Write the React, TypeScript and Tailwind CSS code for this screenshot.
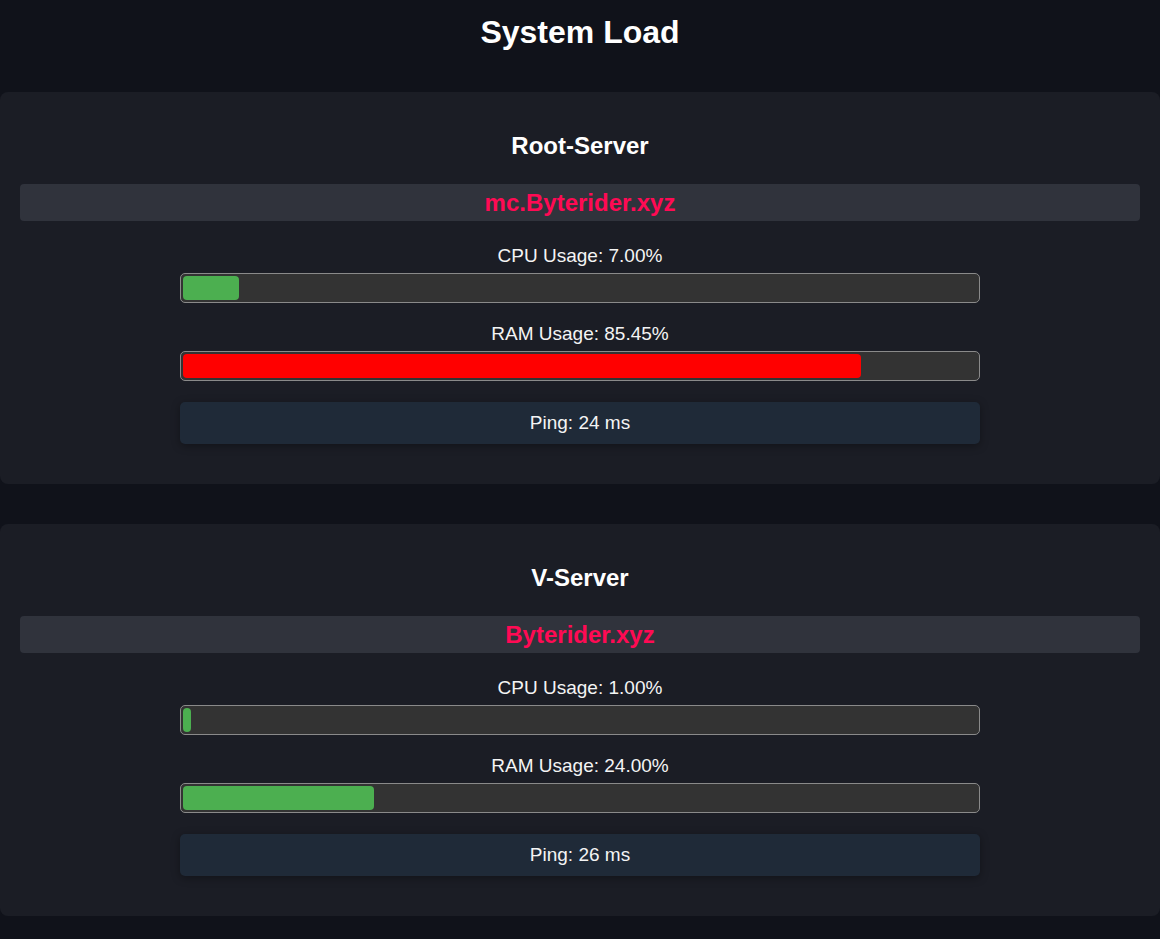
type Server = {
  name: string;
  host: string;
  cpu: number;
  ram: number;
  ping: number;
};

const servers: Server[] = [
  { name: "Root-Server", host: "mc.Byterider.xyz", cpu: 7, ram: 85.45, ping: 24 },
  { name: "V-Server", host: "Byterider.xyz", cpu: 1, ram: 24, ping: 26 },
];

function UsageBar({ label, value }: { label: string; value: number }) {
  const color = value > 80 ? "bg-[#ff0000]" : "bg-[#4caf50]";
  return (
    <div className="mx-auto w-[800px]">
      <p className="text-center text-[19px] leading-[20px] text-[#f4f4f4]">
        {label}: {value.toFixed(2)}%
      </p>
      <div className="mt-[7px] h-[30px] rounded-[5px] border border-[#8a8a8a] bg-[#333333] p-[2px]">
        <div
          className={`h-full rounded-[4px] ${color}`}
          style={{ width: `${value}%` }}
        />
      </div>
    </div>
  );
}

function ServerCard({ server }: { server: Server }) {
  return (
    <section className="rounded-[8px] bg-[#1b1d25] px-[20px] pt-[40px] pb-[40px]">
      <h2 className="text-center text-[24px] leading-[28px] font-bold text-white">
        {server.name}
      </h2>
      <div className="mt-[24px] h-[37px] rounded-[4px] bg-[#30333c] text-center text-[24px] leading-[37px] font-bold text-[#ff0a54]">
        {server.host}
      </div>
      <div className="mt-[25px]">
        <UsageBar label="CPU Usage" value={server.cpu} />
      </div>
      <div className="mt-[21px]">
        <UsageBar label="RAM Usage" value={server.ram} />
      </div>
      <div className="mx-auto mt-[21px] h-[42px] w-[800px] rounded-[5px] bg-[#1f2a38] text-center text-[19px] leading-[42px] text-[#f4f4f4] shadow-[0_2px_8px_rgba(0,0,0,0.35)]">
        Ping: {server.ping} ms
      </div>
    </section>
  );
}

export default function App() {
  return (
    <div className="min-h-[939px] bg-[#10121a] font-['Liberation_Sans',Arial,sans-serif] text-white">
      <h1 className="pt-[14px] text-center text-[32px] leading-[37px] font-bold">
        System Load
      </h1>
      <div className="mt-[41px] flex flex-col gap-[40px]">
        {servers.map((s) => (
          <ServerCard key={s.name} server={s} />
        ))}
      </div>
    </div>
  );
}
